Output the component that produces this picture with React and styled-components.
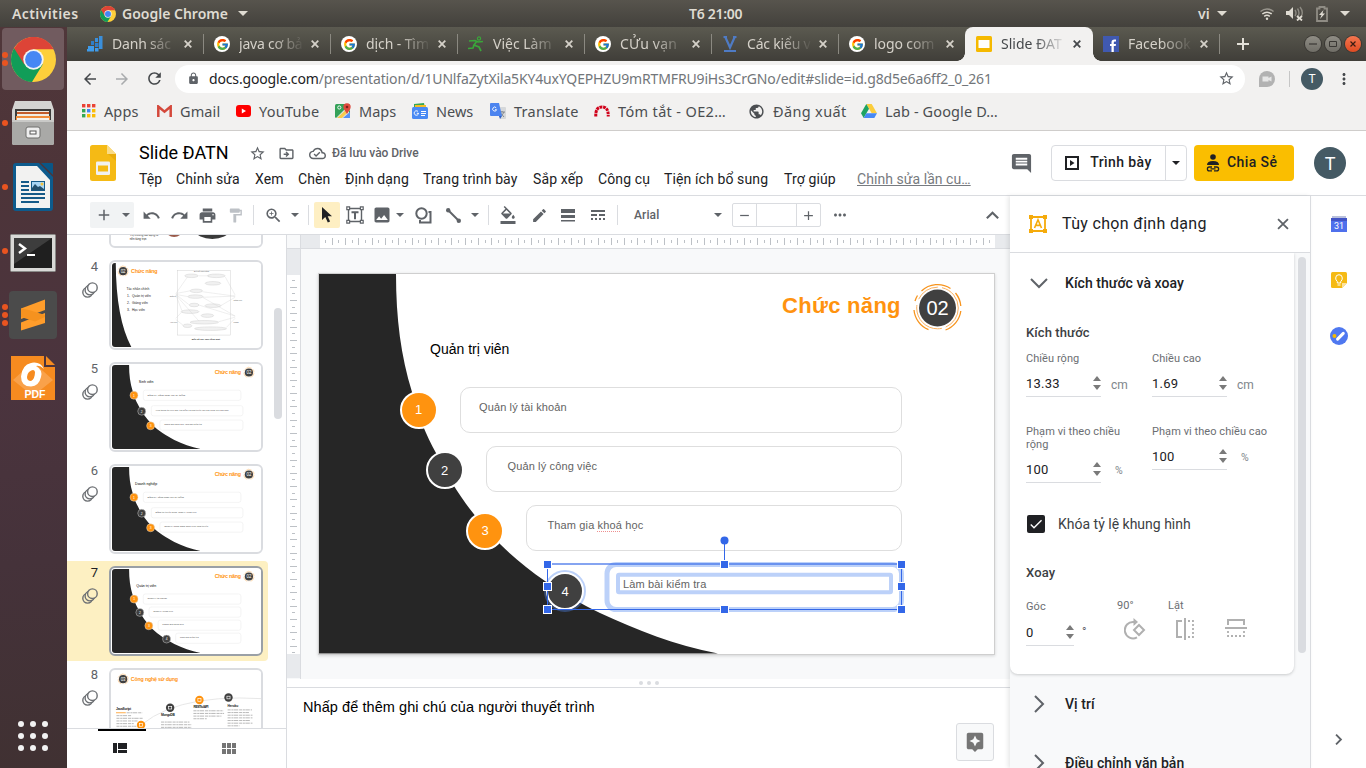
import React from "react";
import styled, { createGlobalStyle, css } from "styled-components";
import {
  MdUndo, MdRedo, MdPrint, MdFormatPaint, MdZoomIn, MdImage, MdMoreHoriz, MdMoreVert, MdAdd, MdRemove,
  MdStarBorder, MdLock, MdArrowBack, MdArrowForward, MdRefresh, MdComment, MdAssistant, MdCheck,
  MdFormatColorFill, MdEdit, MdOutlineDriveFileMove, MdOutlineCloudDone, MdPublic,
} from "react-icons/md";
import { FcGoogle } from "react-icons/fc";

const UI = `"Noto Sans", "Open Sans", sans-serif`;
const DOC = `Roboto, "Noto Sans", sans-serif`;
const SLIDE = `"Liberation Sans", Arial, sans-serif`;

const Global = createGlobalStyle`
  * { box-sizing: border-box; }
  html, body { margin: 0; padding: 0; overflow: hidden; background: #fff; }
  svg { display: block; flex: none; }
`;

/* ---------- shell ---------- */
const Screen = styled.div`
  width: 1366px; height: 768px; display: flex; flex-direction: column; overflow: hidden;
  font-family: ${DOC}; color: #202124; white-space: nowrap;
`;
const Txt = styled.span`
  display: block; flex: none;
  width: ${p => (p.$w ? p.$w + "px" : "auto")};
  font-size: ${p => p.$s || 14}px;
  font-weight: ${p => p.$b || 400};
  color: ${p => p.$c || "inherit"};
  letter-spacing: ${p => p.$ls || 0}px;
  padding-bottom: ${p => p.$up || 0}px;
`;
const TopBar = styled.header`
  height: 27px; flex: none; display: flex; align-items: center; padding: 0 15px 0 12px;
  background: linear-gradient(#57544d, #43413c); color: #dfdbd2; font-family: ${UI};
`;
const TopGroup = styled.div`
  display: flex; align-items: center; gap: ${p => p.$gap || 0}px; width: ${p => p.$w || "auto"};
  justify-content: ${p => p.$j || "flex-start"};
`;
const Gap = styled.i`width: ${p => p.$w}px; flex: none;`;
const Caret = styled.i`
  width: 0; height: 0; flex: none; border: solid transparent; margin: ${p => p.$m || 0};
  border-width: ${p => p.$s || 4}px ${p => p.$s || 4}px 0; border-top-color: ${p => p.$c || "#5f6368"};
`;
const Body = styled.div`display: flex; flex: 1; min-height: 0;`;

/* ---------- dock ---------- */
const Dock = styled.nav`
  width: 67px; flex: none; display: flex; flex-direction: column;
  background: linear-gradient(175deg, #50373a 0%, #4d3439 20%, #4b343e 48%, #45323a 72%, #403132 100%);
`;
const DockItem = styled.div`
  height: 64px; display: flex; align-items: center; position: relative;
`;
const DockTile = styled.div`
  width: 62px; height: 62px; margin-left: 2px; border-radius: 4px; display: flex; align-items: center; justify-content: center;
  background: ${p => (p.$active ? "#715b5f" : "transparent")}; padding-top: ${p => p.$pt || 0}px; padding-bottom: ${p => p.$pb || 0}px;
`;
const DockDots = styled.div`
  position: absolute; left: 2px; top: 0; height: 64px; display: flex; flex-direction: column; justify-content: center; gap: 2px;
  i { width: 6px; height: 6px; border-radius: 50%; background: #e95420; }
`;
const DockApps = styled.div`margin: auto 0 17px 18px;`;

/* ---------- browser ---------- */
const Browser = styled.main`flex: 1; min-width: 0; display: flex; flex-direction: column; background: #fff;`;
const TabStrip = styled.div`
  height: 34px; flex: none; display: flex; padding-left: 10px; background: linear-gradient(#5b5a50, #403e39);
`;
const Tab = styled.div`
  width: 127px; height: 34px; flex: none; display: flex; align-items: center; padding-left: 10px; position: relative;
  color: ${p => (p.$active ? "#45484b" : "#d5d1c9")}; font: 14px ${UI};
  ${p => p.$active && css`
    background: #f2f1f0; border-radius: 8px 8px 0 0; margin: 0 0 0 -1px; width: 128px; padding-left: 11px;
    &::before, &::after { content: ""; position: absolute; bottom: 0; width: 8px; height: 8px; }
    &::before { left: -8px; background: radial-gradient(circle at 0 0, transparent 7.5px, #f2f1f0 8px); }
    &::after { right: -8px; background: radial-gradient(circle at 100% 0, transparent 7.5px, #f2f1f0 8px); }
  `}
`;
const TabText = styled.span`
  width: 68px; margin: 0 4px 0 9px; line-height: 24px; letter-spacing: ${p => p.$ls || 0}px;
  mask-image: linear-gradient(90deg, #000 48%, transparent 96%);
`;
const TabSep = styled.i`
  width: 1px; height: 20px; background: #8b8981; margin: 7px 0 0 -1px; flex: none;
`;
const Favicon = styled.span`
  width: 16px; height: 16px; flex: none; display: flex; align-items: center; justify-content: center;
  background: ${p => p.$bg || "transparent"}; border-radius: ${p => p.$r || 0};
`;
const WinButtons = styled.div`display: flex; gap: 4px; align-items: center; margin: 0 5px 0 auto;`;
const WinButton = styled.div`
  width: 16px; height: 16px; border-radius: 50%; display: flex; align-items: center; justify-content: center;
  background: ${p => (p.$red ? "linear-gradient(#f4764f,#df4b22)" : "linear-gradient(#8f8d85,#706e67)")};
  box-shadow: 0 0 0 1px #3a3834;
`;
const AddressRow = styled.div`
  height: 36px; flex: none; display: flex; align-items: center; background: #f2f1f0; padding: 0 0 0 14px; color: #45484b;
`;
const NavCell = styled.div`
  width: 32px; display: flex; color: ${p => p.$c || "#45484b"}; padding-bottom: 1px;
`;
const UrlPill = styled.div`
  width: 1070px; height: 28px; border-radius: 14px; background: #fff; margin-left: -2px; padding: 0 10px 2px 12px;
  display: flex; align-items: center; font: 14px ${UI}; color: #72767a;
`;
const Url = styled.span`
  flex: 1; margin-left: 9px; letter-spacing: -.152px; b { font-weight: 400; color: #202124; }
`;
const VRule = styled.i`
  width: 1px; height: ${p => p.$h}px; background: ${p => p.$c || "#dadce0"}; margin: ${p => p.$m || 0}; flex: none;
`;
const RoundT = styled.div`
  width: ${p => p.$d}px; height: ${p => p.$d}px; border-radius: 50%; background: #455a64; color: #fff; flex: none;
  display: flex; align-items: center; justify-content: center; font: ${p => p.$fs}px ${DOC};
`;
const Bookmarks = styled.div`
  height: 34px; flex: none; background: #f2f1f0; border-bottom: 1px solid #cfcdcb; display: flex; align-items: center;
  padding: 0 0 5px 15px; font-family: ${UI}; color: #4b4e51;
`;
const Bookmark = styled.div`
  display: flex; align-items: center; gap: 8px; width: ${p => p.$w}px; flex: none;
`;

/* ---------- docs header ---------- */
const DocHeader = styled.div`
  height: 65px; flex: none; display: flex; border-bottom: 1px solid #dadce0; padding: 0 20px 0 23px;
`;
const TitleBlock = styled.div`flex: 1; margin-left: 23px; display: flex; flex-direction: column;`;
const TitleRow = styled.div`display: flex; align-items: center; height: 24px; margin-top: 10px; color: #5f6368;`;
const MenuRow = styled.div`display: flex; align-items: center; height: 28px;`;
const MenuLink = styled.span`
  font-size: 14px; letter-spacing: .05px; color: #777b80; text-decoration: underline; margin-left: 6px;
`;
const HeaderActions = styled.div`display: flex; align-items: center; height: 64px;`;
const SplitButton = styled.div`
  width: 136px; height: 36px; border: 1px solid #dadce0; border-radius: 4px; display: flex; align-items: center; margin-left: 18px;
`;
const ShareButton = styled.div`
  width: 100px; height: 36px; border-radius: 4px; background: #fabe00; display: flex; align-items: center; margin: 0 20px 0 7px; padding-left: 12px;
`;

/* ---------- workspace ---------- */
const Work = styled.div`flex: 1; display: flex; min-height: 0;`;
const Editor = styled.section`width: 943px; display: flex; flex-direction: column; flex: none;`;
const Tools = styled.div`
  height: 39px; flex: none; display: flex; align-items: center; border-bottom: 1px solid #dadce0; padding-left: 23px; color: #5f6368;
`;
const Tool = styled.div`
  width: ${p => p.$w || 28}px; height: 26px; flex: none; display: flex; align-items: center; justify-content: center;
  background: ${p => p.$bg || "transparent"}; border-radius: 2px; color: ${p => p.$c || "inherit"}; margin-left: ${p => p.$ml || 0}px;
`;
const SizeBox = styled.div`
  width: 89px; height: 24px; border: 1px solid #dadce0; border-radius: 2px; display: grid; grid-template-columns: 23px 40px 1fr;
  margin-left: 10px;
  div { display: flex; align-items: center; justify-content: center; }
  div + div { border-left: 1px solid #dadce0; }
`;
const Stage = styled.div`flex: 1; display: flex; min-height: 0;`;
const Film = styled.aside`width: 220px; flex: none; display: flex; flex-direction: column; border-right: 1px solid #dadce0;`;
const FilmScroll = styled.div`flex: 1; overflow: hidden; display: flex; min-height: 0;`;
const FilmList = styled.div`width: 201px; margin-top: -82px; flex: none;`;
const FilmRow = styled.div`
  height: 100px; margin-bottom: 2px; display: flex; padding: 5px 0 0 0; border-radius: 0 4px 4px 0;
  background: ${p => (p.$active ? "#fdf0c2" : "transparent")};
`;
const FilmMeta = styled.div`
  width: 42px; flex: none; display: flex; flex-direction: column; align-items: flex-end; padding-right: 11px; gap: 8px;
  font-size: 13px; line-height: 14px; color: ${p => (p.$active ? "#202124" : "#5f6368")};
`;
const Frame = styled.div`
  width: 154px; height: 90px; border-radius: 6px; border: 2px solid ${p => (p.$active ? "#9aa0a6" : "#dadce0")};
  background: #fff; padding: 1px; overflow: hidden;
  svg { border-radius: 3px; }
`;
const FilmBar = styled.i`width: 8px; height: 111px; border-radius: 4px; background: #dadce0; margin: 73px 0 0 6px;`;
const ViewSwitch = styled.div`height: 40px; flex: none; border-top: 1px solid #dadce0; display: flex; padding-left: 31px;`;
const ViewTab = styled.div`
  width: ${p => p.$w}px; display: flex; justify-content: center; padding-top: ${p => (p.$on ? 12 : 14)}px; margin-left: ${p => p.$ml || 0}px;
  padding-right: ${p => (p.$on ? 4 : 0)}px; border-top: ${p => (p.$on ? "2px solid #000" : 0)};
`;
const RulerV = styled.div`width: 14px; flex: none; border-right: 1px solid #dadce0; height: 444px; background: #f8f9fa;`;
const CanvasCol = styled.div`flex: 1; min-width: 0; display: flex; flex-direction: column;`;
const CanvasArea = styled.div`
  height: 430px; flex: none; background: #f8f9fa; padding: 24px 0 0 17px;
`;
const Upper = styled.div`display: flex; height: 444px; flex: none; border-bottom: 1px solid #dadce0;`;
const UpperMain = styled.div`flex: 1; display: flex; flex-direction: column;`;
const RulerH = styled.div`height: 14px; border-bottom: 1px solid #dadce0; background: #fff;`;
const Grip = styled.div`
  height: 9px; flex: none; border-bottom: 1px solid #dadce0; display: flex; gap: 4px; align-items: center; justify-content: center;
  i { width: 4px; height: 4px; border-radius: 50%; background: #dadce0; }
`;
const Notes = styled.div`
  flex: 1; display: flex; justify-content: space-between; padding: 11px 16px 0 16px; color: #000; font-family: ${SLIDE};
`;
const ExploreButton = styled.div`
  width: 38px; height: 38px; margin-top: 24px; border: 1px solid #dadce0; border-radius: 3px; background: #f8f9fa;
  display: flex; align-items: center; justify-content: center; color: #757575;
`;

/* ---------- slide ---------- */
const SlidePage = styled.div`
  width: 677px; height: 382px; border: 1px solid #cfcfcf; background: #fff; position: relative; box-shadow: 0 1px 3px rgba(0,0,0,.15);
  font-family: ${SLIDE};
`;
const Art = styled.svg`position: absolute; left: 0; top: 0; overflow: visible;`;
const SlideText = styled.div`
  position: absolute; left: ${p => p.$x}px; top: ${p => p.$y - 14}px; line-height: 28px; font-size: ${p => p.$s}px;
  color: ${p => p.$c}; font-weight: ${p => p.$b || 400}; letter-spacing: ${p => p.$ls || 0}px;
  u { text-decoration: underline dotted #ee8f8f 1px; text-underline-offset: 2px; }
`;
const Box = styled.div`
  position: absolute; left: ${p => p.$x}px; top: ${p => p.$y}px; width: ${p => 583 - p.$x}px; height: 46px;
  border: 1px solid #dedede; border-radius: 10px;
`;
const Bullet = styled.div`
  position: absolute; left: ${p => p.$x - 19}px; top: ${p => p.$y - 19}px; width: 38px; height: 38px; border-radius: 50%;
  border: 2px solid #fff; background: ${p => p.$c}; color: #fff; font-size: 13px;
  display: flex; align-items: center; justify-content: center;
`;

/* ---------- format panel ---------- */
const Panel = styled.aside`
  width: 301px; flex: none; display: flex; flex-direction: column; border-right: 1px solid #dadce0; background: #f8f9fa;
  box-shadow: -2px 0 4px rgba(60,64,67,.12); position: relative;
`;
const PanelHead = styled.div`
  height: 57px; flex: none; background: #fff; border-bottom: 1px solid #dadce0; display: flex; align-items: center; padding: 0 17px 0 19px;
`;
const PanelBody = styled.div`flex: 1; display: flex; min-height: 0; overflow: hidden;`;
const PanelCol = styled.div`width: 284px; flex: none;`;
const Card = styled.div`
  height: 421px; background: #fff; border-radius: 0 0 8px 8px; box-shadow: 0 1px 3px rgba(60,64,67,.25); padding: 0 16px;
  display: flex; flex-direction: column;
`;
const SectionHead = styled.div`
  display: flex; align-items: center; height: ${p => p.$h || 60}px; font-size: 14px; font-weight: 500; flex: none;
  padding-left: ${p => p.$pl || 0}px; gap: ${p => p.$gap}px; letter-spacing: .05px;
`;
const SubHead = styled(SectionHead)`
  font-size: 13px; height: ${p => p.$h}px; margin-top: ${p => p.$mt || 0}px; color: #3c4043; letter-spacing: .1px;
`;
const Fields = styled.div`display: grid; grid-template-columns: 126px 126px; margin-top: ${p => p.$mt}px; align-items: start;`;
const Field = styled.div`display: flex; flex-direction: column;`;
const FieldLabel = styled.div`
  font-size: 11px; line-height: 13px; letter-spacing: .06px; color: #6b6e72; white-space: normal; width: ${p => p.$w || 50}px;
`;
const FieldRow = styled.div`display: flex; align-items: center; margin-top: 6px; height: 26px;`;
const Input = styled.div`
  width: ${p => p.$w || 75}px; height: 26px; border-bottom: 1px solid #dadce0; display: flex; align-items: center; justify-content: space-between;
  font-size: 13px; letter-spacing: .25px;
`;
const Unit = styled.span`
  font-size: 12px; color: #80868b; margin-left: ${p => (p.$pct ? 14 : 10)}px; padding-top: 1px; transform-origin: left;
  ${p => p.$pct && "font-size: 10.5px;"}
`;
const Degree = styled.span`font-size: 12px; color: #5f6368; padding-bottom: 3px;`;
const Spin = styled.div`
  display: flex; flex-direction: column; gap: 4px; margin-bottom: 1px;
  i { border: 4px solid transparent; border-width: 0 4px 5px; border-bottom-color: #7a7a7a; }
  i + i { border-width: 5px 4px 0; border-top-color: #7a7a7a; }
`;
const Check = styled.div`
  width: 18px; height: 18px; border-radius: 2px; background: #202124; color: #fff; display: flex; align-items: center; justify-content: center;
`;
const CheckRow = styled.div`display: flex; align-items: center; gap: 13px; margin: 31px 0 0 1px; height: 20px; color: #3c4043;`;
const RotateRow = styled.div`display: flex; margin-top: 10px;`;
const RotateCol = styled.div`
  display: flex; flex-direction: column; width: ${p => p.$w}px; gap: ${p => p.$gap || 6}px; margin-top: ${p => (p.$gap ? 0 : -1)}px;
`;
const Indent = styled.div`padding-left: 7px;`;
const PanelBar = styled.i`width: 8px; height: 396px; border-radius: 4px; background: #dadce0; margin: 4px 0 0 4px;`;
const SideRail = styled.aside`
  flex: 1; display: flex; flex-direction: column; align-items: center; padding: 20px 0 23px 1px; gap: 39.5px;
  > :last-child { margin-top: auto; margin-right: 2px; }
`;

/* ---------- drawings ---------- */
const ChromeLogo = ({ s }) => (
  <svg width={s} height={s} viewBox="0 0 44 44">
    <circle cx="22" cy="22" r="22" fill="#fdcf3b" />
    <path d="M22 22 L3 11 A22 22 0 0 0 20.5 44 L31 27z" fill="#119d58" />
    <path d="M22 12 H41.8 A22 22 0 0 0 3 11 L13 27z" fill="#dd4437" />
    <circle cx="22" cy="22" r="10" fill="#f3f3f3" />
    <circle cx="22" cy="22" r="8.2" fill="#4687f4" />
  </svg>
);
const FilesIcon = () => (
  <svg width="44" height="46" viewBox="0 0 44 46">
    <path d="M4 1h36l3 9v33q0 2-2 2H3q-2 0-2-2V10z" fill="#d3d3d1" />
    <path d="M4 9h36v12H4z" fill="#3c3c3b" />
    <path d="M6 11h32v10H6z" fill="#f0ece4" />
    <path d="M6 12h32v2H6z" fill="#c35c2b" />
    <path d="M5 16h34v5H5z" fill="#f18c3a" /><path d="M6 18h32v3H6z" fill="#f5f2ec" />
    <path d="M1 20h42v23q0 2-2 2H3q-2 0-2-2z" fill="#a9a9a7" />
    <path d="M1 20h42v2H1z" fill="#c9c9c7" />
    <rect x="15" y="27" width="14" height="11" rx="2" fill="#eee" stroke="#6e6e6c" />
    <rect x="19" y="31" width="6" height="3" fill="#fff" stroke="#555" />
  </svg>
);
const WriterIcon = () => (
  <svg width="40" height="48" viewBox="0 0 40 48">
    <path d="M3 0h23l14 14v31q0 3-3 3H3q-3 0-3-3V3q0-3 3-3z" fill="#0d5b8d" />
    <path d="M28 0h11q1 0 1 1v11z" fill="#0a5686" />
    <path d="M3 3h21l13 14v28H3z" fill="#f2f2f1" />
    <g stroke="#155a88" strokeWidth="2"><path d="M8 19h8M8 23h8M8 27h8M8 31h24M8 35h24M8 39h18" /></g>
    <rect x="18" y="18" width="14" height="10" fill="#155a88" /><rect x="19" y="19" width="12" height="8" fill="#a9d5f3" />
    <path d="M19 27v-2l3-4 3 3 2-1 4 3v1z" fill="#24506c" /><circle cx="29" cy="21" r="1.5" fill="#f3c13b" />
  </svg>
);
const TerminalIcon = () => (
  <svg width="46" height="38" viewBox="0 0 46 38">
    <rect x=".5" y=".5" width="45" height="37" rx="1" fill="#d9d9d7" stroke="#8a8a88" />
    <rect x="4" y="4" width="38" height="30" fill="#1f1f1f" /><path d="M4 4h38L4 30z" fill="#3d3d3d" />
    <path d="M9 10l6 4.500-6 4.500" fill="none" stroke="#fff" strokeWidth="2.400" /><path d="M17 21h8" stroke="#fff" strokeWidth="2" />
  </svg>
);
const SublimeIcon = () => (
  <svg width="48" height="48" viewBox="0 0 48 48">
    <rect width="48" height="48" rx="4" fill="#4b4b4b" />
    <path d="M12 17.500L36 8.500v10.500L12 28z" fill="#ff9d2b" />
    <path d="M12 31.500L36 22v10L12 39.500z" fill="#ff9d2b" />
    <path d="M12 17.500V26l14 4.500L36 26v-2l-16-5z" fill="#f5921f" />
  </svg>
);
const FoxitIcon = () => (
  <svg width="44" height="44" viewBox="0 0 44 44">
    <path d="M0 0h33v11h11v33H0z" fill="#f68b20" /><path d="M35 0l9 9h-9z" fill="#f68b20" />
    <path d="M22 6l20 18-20 16L2 24z" fill="#fbb168" opacity=".6" />
    <path d="M20 7q9-2 13 6-4-4-8-3 7 4 5 11-2 9-10 9.500-10 0-10-10Q11 9 20 7z" fill="#fff" />
    <path d="M18 16q5-4 6 0 0 7-4 9-4 0-4-4 0-3 2-5z" fill="#f68b20" />
    <text x="13.500" y="42" fontFamily="Liberation Sans, sans-serif" fontWeight="700" fontSize="10.500" fill="#fff">PDF</text>
  </svg>
);
const GridDots = () => (
  <svg width="30" height="30" viewBox="0 0 30 30" fill="#f2f2f2">
    {[3, 15, 27].map(y => [3, 15, 27].map(x => <circle key={x + "-" + y} cx={x} cy={y} r="3" />))}
  </svg>
);
const Wifi = () => (
  <svg width="14" height="14" viewBox="0 0 14 14" fill="none" stroke="#dfdbd2" strokeWidth="1.500">
    <path d="M.5 4.500q6.500-5 13 0" opacity=".5" /><path d="M2.300 7q4.700-3.600 9.400 0" /><path d="M4.200 9.300q2.800-2 5.600 0" /><circle cx="7" cy="11.800" r="1.200" fill="#dfdbd2" stroke="none" />
  </svg>
);
const Sound = () => (
  <svg width="18" height="15" viewBox="0 0 18 15">
    <path d="M0 5h3l4-4v12L3 9H0z" fill="#dfdbd2" />
    <path d="M9 4q2 3 0 6M11.500 2.500q3 4.500 0 9M14 1q4 5 1 10" fill="none" stroke="#8d8a82" strokeWidth="1.400" />
    <path d="M11 10l5 4.500M16 10l-5 4.500" stroke="#dfdbd2" strokeWidth="1.800" />
  </svg>
);
const Battery = () => (
  <svg width="12" height="16" viewBox="0 0 12 16">
    <path d="M3.500 2.500V1h5v1.500H11v12.500H1V2.500z" fill="none" stroke="#8f8c84" strokeWidth="1.800" />
    <path d="M7.500 4L3 9h2.500L4 13l5-5.500H6.500z" fill="#dfdbd2" />
  </svg>
);
const X = ({ s = 8, c = "currentColor", w = 1.8 }) => (
  <svg width={s} height={s} viewBox="0 0 8 8"><path d="M.7.7l6.600 6.600M7.300.7L.7 7.300" stroke={c} strokeWidth={w} /></svg>
);
const Chev = ({ dir, s = 18, w = 2 }) => (
  <svg width={s} height={s} viewBox="0 0 18 18" fill="none" stroke="#5f6368" strokeWidth={w}>
    <path d={dir === "down" ? "M1 5l8 8 8-8" : dir === "up" ? "M3 12l6-6 6 6" : "M5 1l8 8-8 8"} />
  </svg>
);
const BarsIcon = () => (
  <svg width="16" height="16" viewBox="0 0 16 16">
    <path d="M8 2h3v4H8zM12 0h3.500v13H12z" fill="#3a8fdc" /><path d="M4 5h3v4H4zM8 7h3.500v4H8z" fill="#2f7dc8" />
    <path d="M1 10h6v3H1zM0 13h7v2.500H0zM8 12h3.500v3.500H8z" fill="#3f9bea" />
  </svg>
);
const RunnerIcon = () => (
  <svg width="16" height="16" viewBox="0 0 16 16" fill="none" stroke="#3aa63a" strokeWidth="1.700">
    <circle cx="11" cy="2.500" r="1.600" strokeWidth="1.200" /><path d="M1 5l6-.500 3 1.500 5-.500M9 5L6 9l5 2 2 4M6 9l-1 3-5 .500" />
  </svg>
);
const VIcon = () => (
  <svg width="14" height="16" viewBox="0 0 14 16" fill="none" stroke="#4f7bc4" strokeWidth="2.200"><path d="M.5 1h3.500M10 1h3.500M2.300 1L7 11.500 11.700 1" /><path d="M1 15h12" strokeWidth="2" /></svg>
);
const SlidesFav = () => (
  <svg width="16" height="16" viewBox="0 0 16 16"><rect width="16" height="16" rx="1.500" fill="#f5b900" /><path d="M2.500 4h11v8h-11z" fill="#fff" /></svg>
);
const FbIcon = () => (
  <svg width="16" height="16" viewBox="0 0 16 16"><path d="M0 0h16v16H0z" fill="#4059b0" /><path d="M8.500 16V10H7V8h1.500V6.300Q8.500 3.500 11.500 3.500H13v2h-1.200q-1 0-1 1V8H13l-.3 2h-1.900v6z" fill="#fff" /></svg>
);
const AppsIcon = () => {
  const c = ["#ea4335", "#ea4335", "#ea4335", "#34a853", "#4285f4", "#fbbc04", "#34a853", "#fbbc04", "#fbbc04"];
  return <svg width="14" height="14" viewBox="0 0 14 14">{c.map((f, i) => <rect key={i} x={(i % 3) * 5} y={Math.floor(i / 3) * 5} width="3.400" height="3.400" fill={f} />)}</svg>;
};
const GmailIcon = () => (
  <svg width="15" height="12" viewBox="0 0 15 12"><path d="M0 0h15v12H0z" fill="#f1efef" /><path d="M1.300 12V1.500l6.200 5.200 6.200-5.200V12" fill="none" stroke="#d4483b" strokeWidth="2.500" /></svg>
);
const YtIcon = () => (
  <svg width="15" height="12" viewBox="0 0 15 12"><rect width="15" height="12" rx="3" fill="#f00" /><path d="M5.800 3.500L10 6 5.800 8.500z" fill="#fff" /></svg>
);
const MapsIcon = () => (
  <svg width="16" height="16" viewBox="0 0 16 16"><rect y="1" width="15" height="14" rx="1.500" fill="#34a158" /><path d="M1 15L14 2v13z" fill="#dfe2e4" /><path d="M2 15L13 5l2 2-8 8z" fill="#f7cb4d" /><path d="M8 15h7V9z" fill="#5491f5" /><circle cx="4.300" cy="4.500" r="1.600" fill="none" stroke="#fff" strokeWidth=".9" /><path d="M8.300 4a3.700 3.700 0 0 1 7.400 0q0 2-2 4.200L12 11l-1.700-2.800Q8.300 6 8.300 4z" fill="#de4a3e" /><circle cx="12" cy="4" r="1.300" fill="#80201a" /></svg>
);
const NewsIcon = () => (
  <svg width="16" height="16" viewBox="0 0 16 16"><path d="M2 1l10-1 1 5H2z" fill="#36a655" /><path d="M3 2h11v5H3z" fill="#f8bd24" /><rect y="4" width="16" height="12" rx="1.500" fill="#4a8af4" /><path d="M6 8.500a2.200 2.200 0 1 0 .6 1.800H4.800" fill="none" stroke="#fff" /><path d="M9 8.500h5M9 10.500h5M9 12.500h4" stroke="#fff" /></svg>
);
const TranslateIcon = () => (
  <svg width="16" height="16" viewBox="0 0 16 16"><path d="M6 4h9q1 0 1 1v10q0 1-1 1h-5z" fill="#d6d8da" /><path d="M9 9h6M12 8v1M14 9q-1 3-4 4M10.500 10l3.500 4" stroke="#7b8086" fill="none" strokeWidth=".9" /><path d="M1 0h8l3 13H1q-1 0-1-1V1q0-1 1-1z" fill="#4c84ef" /><path d="M9 13h3l-2 3z" fill="#2f5fc4" /><path d="M6.200 4.800A2 2 0 1 0 6.600 6.700H5" fill="none" stroke="#fff" strokeWidth=".9" /></svg>
);
const ArcIcon = () => (
  <svg width="16" height="12" viewBox="0 0 16 12"><path d="M1.800 11.500q-.5-9.500 6.200-9.500t6.200 9.500" fill="none" stroke="#d0021b" strokeWidth="3" strokeDasharray="2.800 .7" /></svg>
);
const DriveIcon = () => (
  <svg width="16" height="14" viewBox="0 0 16 14"><path d="M5.300 0h5.400L16 9.300h-5.300z" fill="#fbcd3c" /><path d="M5.300 0L8 4.700 2.700 14 0 9.300z" fill="#1ea362" /><path d="M5.400 9.300H16L13.300 14H2.700z" fill="#4688f4" /></svg>
);
const SlidesDocIcon = () => (
  <svg width="26" height="36" viewBox="0 0 26 36">
    <path d="M2.500 0H17l9 9v24.500q0 2.500-2.500 2.500h-21Q0 36 0 33.500v-31Q0 0 2.500 0z" fill="#f5ba15" />
    <path d="M17 0l9 9h-9z" fill="#fadb85" /><path d="M18 9h8v7z" fill="#e9ac0b" /><rect x="6" y="16.500" width="14" height="13.500" rx="1.300" fill="#f1f1f1" /><path d="M8 20.500h10v6H8z" fill="#f5ba15" />
  </svg>
);
const PlayBox = () => (
  <svg width="14" height="14" viewBox="0 0 14 14"><path d="M1 1h12v12H1z" fill="none" stroke="#202124" strokeWidth="2" /><path d="M5 4v6l4.500-3z" fill="#202124" /></svg>
);
const ShareIcon = () => (
  <svg width="14" height="18" viewBox="0 0 14 18" fill="#202124"><circle cx="7" cy="3" r="2.800" /><path d="M1 11q0-4 6-4t6 4z" /><g fill="none" stroke="#202124" strokeWidth="1.300"><path d="M6 16.800H3.300a1.900 1.900 0 0 1 0-3.800H6M8 13h2.700a1.900 1.900 0 0 1 0 3.800H8M4.500 14.900h5" /></g></svg>
);
const ArrowCursor = () => (
  <svg width="12" height="18" viewBox="0 0 12 18"><path d="M1 1v13l3.300-3 2.500 5.500 2.300-1-2.400-5.300H11z" fill="#202124" /></svg>
);
const TextBoxIcon = () => (
  <svg width="18" height="18" viewBox="0 0 18 18" fill="none" stroke="#5f6368" strokeWidth="1.400"><path d="M2.500 2.500h13v13h-13z" /><path d="M5.500 6.200h7M9 6.200v7" strokeWidth="2" /><g fill="#fff" strokeWidth="1.200"><path d="M.8.8h2.800v2.800H.8zM14.400.8h2.800v2.800h-2.800zM.8 14.400h2.800v2.800H.8zM14.400 14.400h2.800v2.800h-2.800z" /></g></svg>
);
const ShapeIcon = () => (
  <svg width="17" height="17" viewBox="0 0 17 17" fill="none" stroke="#5f6368" strokeWidth="2"><circle cx="6.500" cy="6.500" r="5.200" /><path d="M13.500 5H15.500V15.500H5V13" /></svg>
);
const LineIcon = () => (
  <svg width="15" height="15" viewBox="0 0 15 15"><path d="M2 2l11 11" stroke="#5f6368" strokeWidth="2" /><circle cx="2.200" cy="2.200" r="2.200" fill="#5f6368" /><circle cx="12.800" cy="12.800" r="2.200" fill="#5f6368" /></svg>
);
const WeightIcon = () => <svg width="14" height="13" viewBox="0 0 14 13" fill="#5f6368"><path d="M0 0h14v4H0zM0 6h14v3H0zM0 11h14v1.500H0z" /></svg>;
const DashIcon = () => <svg width="14" height="12" viewBox="0 0 14 12" fill="#5f6368"><path d="M0 1h14v2H0zM0 5h6v2H0zM8 5h6v2H8zM0 9h2v2H0zM4 9h2v2H4zM8 9h2v2H8zM12 9h2v2h-2z" /></svg>;
const AnimIcon = ({ bg }) => (
  <svg width="16" height="16" viewBox="0 0 16 16" fill={bg} stroke="#6d7074" strokeWidth="1.400">
    <circle cx="5.600" cy="10.300" r="4.800" /><circle cx="7.900" cy="8.100" r="4.800" /><circle cx="10.400" cy="5.700" r="4.800" />
  </svg>
);
const FormatIcon = () => (
  <svg width="18" height="18" viewBox="0 0 18 18"><path d="M2 2h14v14H2z" fill="none" stroke="#f5ab0c" strokeWidth="1.800" /><path d="M0 0h4v4H0zM14 0h4v4h-4zM0 14h4v4H0zM14 14h4v4h-4z" fill="#f5ab0c" /><path d="M5.500 13L9 4.800 12.500 13M6.700 10.400h4.600" fill="none" stroke="#f5ab0c" strokeWidth="1.600" /></svg>
);
const RotateIcon = () => (
  <svg width="22" height="22" viewBox="0 0 22 22" fill="none" stroke="#b0b0b0" strokeWidth="2"><path d="M13 19.300A8.200 8.200 0 1 1 10 4h2" /><path d="M9.500 0L14 4 9.500 8z" fill="#b0b0b0" stroke="none" /><path d="M15 7l5 5-5 5-5-5z" /></svg>
);
const FlipH = () => (
  <svg width="20" height="22" viewBox="0 0 20 22" fill="none" stroke="#b0b0b0" strokeWidth="2"><path d="M7 3H2v16h5M10 0v22" /><path d="M13 3h5v16h-5" strokeDasharray="2 2" strokeWidth="1.800" /></svg>
);
const FlipV = () => (
  <svg width="22" height="20" viewBox="0 0 22 20" fill="none" stroke="#b0b0b0" strokeWidth="2"><path d="M3 7V2h16v5M0 10h22" /><path d="M3 13v5h16v-5" strokeDasharray="2 2" strokeWidth="1.800" /></svg>
);
const CalendarIcon = () => (
  <svg width="16" height="16" viewBox="0 0 16 16"><path d="M1 0h14v4H1z" fill="#b9c0dc" /><path d="M0 2h16v14H0z" fill="#4f70ec" /><path d="M0 2h16v3H0z" fill="#4254c5" /><text x="8" y="13" textAnchor="middle" fontSize="9" fontFamily="Roboto, sans-serif" fill="#fff">31</text></svg>
);
const KeepIcon = () => (
  <svg width="16" height="16" viewBox="0 0 16 16"><path d="M1.500 0h13q1.500 0 1.500 1.500V11l-5 5H1.500Q0 16 0 14.500v-13Q0 0 1.500 0z" fill="#f5ba15" /><path d="M16 11l-5 5v-5z" fill="#fbe3a0" /><path d="M6.300 9.500Q4.500 8 4.700 6a3.300 3.300 0 0 1 6.600 0q.2 2-1.600 3.500v1.500H6.300zM6.500 13h3" fill="none" stroke="#fff" /></svg>
);
const TasksIcon = () => (
  <svg width="18" height="18" viewBox="0 0 19 19"><circle cx="9.500" cy="9.500" r="9.500" fill="#4f78f0" /><circle cx="4.700" cy="9.500" r="2.100" fill="#f5b900" /><path d="M8 12.800l6-6" stroke="#fff" strokeWidth="3.200" strokeLinecap="round" /></svg>
);

/* ---------- slide art ---------- */
const CURVE = "M0 0H77C77 45 82 82 93 118C99 142 107 161 117 179C134 215 155 243 181 270C195 284 210 296 226 307C245 320 262 330 281 339C318 356 355 371 399 379.500H0z";
const Badge = ({ x, y, label = "02" }) => (
  <g transform={`translate(${x} ${y})`}>
    <circle r="20.800" fill="none" stroke="#f9b060" strokeWidth="1" strokeDasharray="24 4 40 6" />
    <path d="M-22.500 -7A23.500 23.500 0 0 1 -20 -12.500M-23.500 2A23.500 23.500 0 0 0 -9 21.700M-16 -17A23.500 23.500 0 0 1 13 -19.500M18 -15A23.500 23.500 0 0 1 23.300 -2M23.300 3A23.500 23.500 0 0 1 8 22" fill="none" stroke="#f7941d" strokeWidth="1.300" />
    <circle r="18.500" fill="#404040" />
    <text y="7.200" textAnchor="middle" fontSize="20" fill="#fff" fontFamily="Liberation Sans, sans-serif">{label}</text>
  </g>
);
const Mini = ({ children }) => (
  <svg width="150" height="84" viewBox="0 0 676 380" preserveAspectRatio="none" fontFamily="Liberation Sans, sans-serif">
    <rect width="676" height="380" fill="#fff" />
    {children}
  </svg>
);
const MiniList = ({ label, lx, items }) => (
  <Mini>
    <path d={CURVE} fill="#262626" />
    <text x="463" y="40" fontSize="24" fontWeight="700" fill="#ff930f" textLength="118">Chức năng</text>
    <Badge x={617} y={34} />
    <text x={lx} y="81" fontSize="16" fill="#000">{label}</text>
    {items.map((it, i) => (
      <g key={i}>
        <rect x={it.b[0]} y={it.b[1]} width={it.b[2] - it.b[0]} height="46" rx="10" fill="none" stroke="#eeeeee" strokeWidth="3" />
        <text x={it.b[0] + 19} y={it.b[1] + 24} fontSize="11" fill="#444" textLength={it.t} lengthAdjust="spacingAndGlyphs">{it.s}</text>
        <circle cx={it.c[0]} cy={it.c[1]} r="18" fill={i % 2 ? "#404040" : "#ff930f"} stroke="#ddd" strokeWidth="2" />
        <text x={it.c[0]} y={it.c[1] + 6} fontSize="15" fill="#fff" textAnchor="middle">{i + 1}</text>
      </g>
    ))}
  </Mini>
);
const three = (a, b, c) => [
  { b: [141, 114, 581], c: [99, 137], ...a },
  { b: [177, 184, 590], c: [134, 209], ...b },
  { b: [216, 249, 590], c: [174, 275], ...c },
];
const four = [
  { b: [141, 113, 581], c: [99.500, 136], t: 88, s: "Quản lý tài khoản" },
  { b: [167, 172, 581], c: [125.500, 196.500], t: 89, s: "Quản lý công việc" },
  { b: [208, 231, 581], c: [166, 257], t: 96, s: "Tham gia khoá học" },
  { b: [287, 290, 581], c: [246, 317], t: 84, s: "Làm bài kiểm tra" },
];
const MiniUseCase = () => (
  <Mini>
    <path d="M0 0H17Q18 250 87 380H0z" fill="#262626" />
    <Badge x={50} y={37} />
    <text x="86" y="45" fontSize="24" fontWeight="700" fill="#ff930f" textLength="119">Chức năng</text>
    <g fontSize="15" fill="#222">
      <text x="65" y="122">Tác nhân chính</text>
      <text x="68" y="154">1.</text><text x="68" y="186">2.</text><text x="68" y="218">3.</text>
      <text x="90" y="154">Quản trị viên</text><text x="90" y="186">Giảng viên</text><text x="90" y="218">Học viên</text>
    </g>
    <g fill="none" stroke="#cdcdcd" strokeWidth="2">
      <rect x="295" y="33" width="239" height="293" />
      {[[358, 58, 30], [470, 58, 40], [455, 92, 35], [380, 126, 28], [376, 152, 34], [370, 190, 22], [455, 193, 36], [352, 220, 40], [430, 238, 28], [416, 268, 64], [340, 284, 20], [444, 297, 72]].map(([x, y, r], i) => (
        <ellipse key={i} cx={x} cy={y} rx={r} ry="8" fill="#f1f1f1" />
      ))}
      <path d="M288 138L341 62M288 138L352 126M288 142L341 152M288 142L346 188M288 145L316 218M288 145L391 262M288 250L316 220M288 256L321 282M391 58H436M555 145L510 62M555 150L408 130M555 150L410 155M555 155L490 193M555 240L391 190M555 240L408 155M555 245L480 266M555 250L515 292" strokeWidth="1.500" />
    </g>
    <g fontSize="8" fill="#555"><text x="260" y="155">Quản trị</text><text x="262" y="272">Học viên</text><text x="548" y="170">Giảng viên</text><text x="548" y="272">Khách</text><text x="370" y="40">Biểu đồ chức năng</text></g>
    <text x="359" y="348" fontSize="10" fontWeight="700" fill="#333" textLength="128">Biểu đồ use case tổng quát</text>
  </Mini>
);
const MiniTech = () => (
  <Mini>
    <Badge x={50} y={37} label="03" />
    <text x="85" y="45" fontSize="24" fontWeight="700" fill="#ff930f" textLength="213">Công nghệ sử dụng</text>
    <path d="M90 285Q250 100 676 125" fill="none" stroke="#e4e4e4" strokeWidth="4" />
    {[[131, 244, 1], [262, 166, 0], [394, 131, 1], [525, 120, 0]].map(([x, y, o], i) => (
      <g key={i}><circle cx={x} cy={y} r="19" fill={o ? "#ff930f" : "#404040"} /><rect x={x - 7} y={y - 6} width="14" height="12" fill="none" stroke="#fff" strokeWidth="3" /></g>
    ))}
    <g fontSize="15" fontWeight="700" fill="#222">
      <text x="18" y="177" textLength="68">JavaScript</text><text x="221" y="204" textLength="62">MongoDB</text><text x="367" y="168" textLength="68">RESTful API</text><text x="521" y="163" textLength="48">Heroku</text>
    </g>
    <g stroke="#a5a5a5" strokeWidth="3.500" strokeDasharray="14 3 9 2 20 4">
      <path d="M66 189h70M20 202h68M20 214h118M20 226h95M20 238h78M20 250h90M221 231h128M221 243h136M221 255h136M367 180h134M367 192h138M367 204h126M367 216h60M521 176h110M521 188h96M521 200h112M521 212h112M521 224h100M521 236h112M521 248h54M221 267h138" />
    </g>
    <path d="M18 189h44" stroke="#ffad4a" strokeWidth="5" />
  </Mini>
);
const MiniCut = () => (
  <Mini>
    <circle cx="280" cy="302" r="42" fill="#9a5a4a" /><ellipse cx="452" cy="315" rx="75" ry="38" fill="#3a3a3a" />
    <g fontSize="13" fill="#222"><text x="80" y="340">Thị trường lao động là</text><text x="80" y="356">nền tảng trực</text></g>
  </Mini>
);

const films = [
  { n: 3, el: <MiniCut /> },
  { n: 4, el: <MiniUseCase /> },
  { n: 5, el: <MiniList label="Sinh viên" lx={121} items={three({ t: 170, s: "Đăng ký, đăng nhập vào hệ thống" }, { t: 329, s: "Xem thông tin việc làm, tìm kiếm và ứng tuyển vào các công việc phù hợp" }, { t: 170, s: "Tham gia khoá học, làm bài kiểm tra" })} /> },
  { n: 6, el: <MiniList label="Doanh nghiệp" lx={104} items={three({ t: 164, s: "Đăng ký, đăng nhập vào hệ thống" }, { t: 185, s: "Đăng tin tuyển dụng, quản lý công việc" }, { t: 198, s: "Quản lý danh sách sinh viên ứng tuyển" })} /> },
  { n: 7, active: true, el: <MiniList label="Quản trị viên" lx={109} items={four} /> },
  { n: 8, el: <MiniTech /> },
];

const ticks = (n, make) => Array.from({ length: n }, (_, i) => make(i + 1));
const HTicks = () => (
  <svg width="709" height="13" viewBox="0 0 709 13">
    <path d="M0 0h19v13H0zM694 0h15v13h-15z" fill="#e8eaed" />
    {ticks(101, k => <rect key={k} x={Math.round(17.500 + k * 6.643)} y={k % 2 ? 5 : 3} width="1" height={k % 2 ? 3 : 7} fill="#bdc1c6" />)}
  </svg>
);
const VTicks = () => (
  <svg width="13" height="443" viewBox="0 0 13 443">
    <rect width="13" height="443" fill="#fff" /><path d="M0 0h13v13H0z" fill="#f8f9fa" /><path d="M0 13h13v1H0z" fill="#dadce0" /><path d="M0 14h13v26H0zM0 419h13v24H0z" fill="#e8eaed" />
    {ticks(57, k => <rect key={k} y={Math.round(38.500 + k * 6.643)} x={k % 2 ? 5 : 3} height="1" width={k % 2 ? 3 : 7} fill="#bdc1c6" />)}
  </svg>
);

const Selection = () => (
  <Art width="675" height="380" viewBox="0 0 675 380">
    <g fill="none" stroke="#4f86ee" strokeOpacity=".38">
      <rect x="288" y="290.500" width="294.500" height="45" rx="9" strokeWidth="5" />
      <rect x="299" y="300.700" width="273" height="17.500" rx="1" strokeWidth="4" />
      <circle cx="246" cy="317" r="20" strokeWidth="2" />
    </g>
    <g fill="none" stroke="#3367e8">
      <path d="M228.500 290H583" strokeOpacity=".6" strokeWidth="2" /><path d="M228.500 290V335.500H582.500V290M405.500 270V286" />
    </g>
    <circle cx="405.500" cy="266.500" r="4" fill="#3367e8" />
    {[[228.500, 290.500], [405.500, 290.500], [582.500, 290.500], [228.500, 312.500], [582.500, 312.500], [228.500, 335.500], [405.500, 335.500], [582.500, 335.500]].map(([x, y], i) => (
      <rect key={i} x={x - 3.500} y={y - 3.500} width="7" height="7" fill="#3367e8" stroke="#fff" strokeWidth="2" paintOrder="stroke" />
    ))}
  </Art>
);

const G = () => <Favicon $bg="#fff" $r="50%"><FcGoogle size={13} /></Favicon>;
const tabs = [
  ["Danh sác", <BarsIcon />, -0.2], ["java cơ bả", <G />, -0.2], ["dịch - Tìm", <G />, -0.1], ["Việc Làm", <RunnerIcon />, 0], ["CỬu vạn", <G />, 0.2],
  ["Các kiểu v", <VIcon />, -0.2], ["logo com", <G />, -0.1], ["Slide ĐAT", <SlidesFav />, 0, true], ["Facebook", <FbIcon />, 0],
];
const bookmarks = [
  ["Apps", <AppsIcon />, 75, 1, 9], ["Gmail", <GmailIcon />, 79, 0.1], ["YouTube", <YtIcon />, 99, 0.25], ["Maps", <MapsIcon />, 77, 0], ["News", <NewsIcon />, 78, 0],
  ["Translate", <TranslateIcon />, 104, 0.25], ["Tóm tắt - OE2…", <ArcIcon />, 154, 0.35], ["Đăng xuất", <MdPublic size={17} />, 113, 0.35], ["Lab - Google D…", <DriveIcon />, 140, 0.12],
];
const menus = [["Tệp", 37], ["Chỉnh sửa", 79], ["Xem", 43], ["Chèn", 47], ["Định dạng", 78], ["Trang trình bày", 110], ["Sắp xếp", 65], ["Công cụ", 66], ["Tiện ích bổ sung", 120], ["Trợ giúp", 67]];

const NumberField = ({ label, value, unit, lw = 122 }) => (
  <Field>
    <FieldLabel $w={lw}>{label}</FieldLabel>
    <FieldRow><Input>{value}<Spin><i /><i /></Spin></Input><Unit $pct={unit === "%"}>{unit}</Unit></FieldRow>
  </Field>
);

export default function App() {
  return (
    <Screen>
      <Global />
      <TopBar>
        <TopGroup $w="677px">
          <Txt $w={88} $s={14} $b={600} $ls={0.4}>Activities</Txt>
          <ChromeLogo s={16} /><Gap $w={6} />
          <Txt $w={116} $s={14} $b={600}>Google Chrome</Txt>
          <Caret $s={5} $c="#dfdbd2" />
        </TopGroup>
        <Txt $w={509} $s={14} $b={600} $ls={-0.3} $up={1}>T6 21:00</Txt>
        <Txt $w={19} $s={14} $b={600}>vi</Txt>
        <Caret $s={5} $c="#dfdbd2" $m="0 33px 0 0" />
        <TopGroup $gap={12}><Wifi /><Sound /><Battery /><Caret $s={5} $c="#dfdbd2" /></TopGroup>
      </TopBar>
      <Body>
        <Dock>
          <DockItem><DockTile $active><ChromeLogo s={45} /></DockTile><DockDots><i /><i /></DockDots></DockItem>
          <DockItem><DockTile><FilesIcon /></DockTile><DockDots><i /></DockDots></DockItem>
          <DockItem><DockTile><WriterIcon /></DockTile><DockDots><i /></DockDots></DockItem>
          <DockItem><DockTile $pt={4}><TerminalIcon /></DockTile><DockDots><i /></DockDots></DockItem>
          <DockItem><DockTile><SublimeIcon /></DockTile><DockDots><i /><i /><i /></DockDots></DockItem>
          <DockItem><DockTile $pb={2}><FoxitIcon /></DockTile></DockItem>
          <DockApps><GridDots /></DockApps>
        </Dock>
        <Browser>
          <TabStrip>
            {tabs.map(([t, icon, ls, active], i) => (
              <React.Fragment key={t}>
                <Tab $active={active}><Favicon>{icon}</Favicon><TabText $ls={ls}>{t}</TabText><X /></Tab>
                {i !== 6 && i !== 7 && <TabSep />}
              </React.Fragment>
            ))}
            <TopGroup $w="45px" $j="center">
              <svg width="12" height="12" viewBox="0 0 12 12"><path d="M6 0v12M0 6h12" stroke="#e3e0d8" strokeWidth="2" /></svg>
            </TopGroup>
            <WinButtons>
              <WinButton><svg width="8" height="8"><path d="M0 4h8" stroke="#3a3834" strokeWidth="1.200" /></svg></WinButton>
              <WinButton><svg width="8" height="8"><path d="M.5 1.500h7v5h-7z" fill="none" stroke="#3a3834" /></svg></WinButton>
              <WinButton $red><X s={6} c="#3a1c12" w={1.600} /></WinButton>
            </WinButtons>
          </TabStrip>
          <AddressRow>
            <NavCell><MdArrowBack size={18} /></NavCell>
            <NavCell $c="#a9abad"><MdArrowForward size={18} /></NavCell>
            <NavCell><MdRefresh size={19} /></NavCell>
            <UrlPill>
              <MdLock size={13} color="#5f6368" />
              <Url><b>docs.google.com</b>/presentation/d/1UNlfaZytXila5KY4uxYQEPHZU9mRTMFRU9iHs3CrGNo/edit#slide=id.g8d5e6a6ff2_0_261</Url>
              <MdStarBorder size={17} color="#5f6368" />
            </UrlPill>
            <TopGroup>
              <svg width="30" height="16" viewBox="0 0 30 16"><path d="M14 8a8 8 0 1 1 8 8h-8z" fill="#b2b2b2" /><path d="M17.500 5.500h6v1.500l3-1.500v5l-3-1.500v1.500h-6z" fill="#e6e6e6" /></svg>
              <VRule $h={16} $c="#c6c6c6" $m="0 11px 0 14px" />
              <RoundT $d={22} $fs={12}>T</RoundT>
            </TopGroup>
            <TopGroup $w="42px" $j="center"><MdMoreVert size={18} /></TopGroup>
          </AddressRow>
          <Bookmarks>
            {bookmarks.map(([t, icon, w, ls]) => <Bookmark key={t} $w={w}>{icon}<Txt $s={14.500} $ls={ls > 0.9 ? 0.1 : ls}>{t}</Txt></Bookmark>)}
          </Bookmarks>

          <DocHeader>
            <TopGroup><SlidesDocIcon /></TopGroup>
            <TitleBlock>
              <TitleRow>
                <Txt $w={110} $s={18} $c="#000" $up={2}>Slide ĐATN</Txt>
                <Txt $w={29}><MdStarBorder size={17} /></Txt>
                <Txt $w={31}><MdOutlineDriveFileMove size={17} /></Txt>
                <Txt $w={23}><MdOutlineCloudDone size={17} /></Txt>
                <Txt $s={12} $b={500} $ls={-0.03}>Đã lưu vào Drive</Txt>
              </TitleRow>
              <MenuRow>
                {menus.map(([m, w]) => <Txt key={m} $w={w} $s={14} $ls={0.12}>{m}</Txt>)}
                <MenuLink>Chỉnh sửa lần cu…</MenuLink>
              </MenuRow>
            </TitleBlock>
            <HeaderActions>
              <MdComment size={23} color="#5f6368" />
              <SplitButton>
                <TopGroup $w="113px" $gap={11} $j="center"><PlayBox /><Txt $s={14} $b={500} $ls={0.4} $up={2}>Trình bày</Txt></TopGroup>
                <VRule $h={34} /><TopGroup $w="19px" $j="center"><Caret $c="#202124" /></TopGroup>
              </SplitButton>
              <ShareButton><TopGroup $gap={7}><ShareIcon /><Txt $s={14} $b={500} $ls={0.4} $up={2}>Chia Sẻ</Txt></TopGroup></ShareButton>
              <RoundT $d={32} $fs={18}>T</RoundT>
            </HeaderActions>
          </DocHeader>

          <Work>
            <Editor>
              <Tools>
                <Tool $w={44} $bg="#f1f3f4"><MdAdd size={18} /><Caret $m="0 0 0 9px" /></Tool>
                <Tool $ml={3}><MdUndo size={19} /></Tool>
                <Tool><MdRedo size={19} /></Tool>
                <Tool><MdPrint size={19} /></Tool>
                <Tool $c="#bdc1c6"><MdFormatPaint size={17} /></Tool>
                <VRule $h={20} $m="0 5px 0 4px" />
                <Tool><MdZoomIn size={19} /></Tool>
                <Tool $w={16}><Caret /></Tool>
                <VRule $h={20} $m="0 5px 0 5px" />
                <Tool $w={26} $bg="#feefc3"><ArrowCursor /></Tool>
                <Tool $ml={1}><TextBoxIcon /></Tool>
                <Tool $w={26}><MdImage size={20} /></Tool>
                <Tool $w={9}><Caret /></Tool>
                <Tool $ml={5}><ShapeIcon /></Tool>
                <Tool $ml={2}><LineIcon /></Tool>
                <Tool $w={16}><Caret /></Tool>
                <VRule $h={20} $m="0 5px 0 5px" />
                <Tool><MdFormatColorFill size={18} /></Tool>
                <Tool $ml={3}><MdEdit size={17} /></Tool>
                <Tool $ml={1}><WeightIcon /></Tool>
                <Tool $ml={2}><DashIcon /></Tool>
                <VRule $h={20} $m="0 16px 0 5px" />
                <Txt $w={80} $s={12} $b={500} $ls={0.100}>Arial</Txt>
                <Caret />
                <SizeBox><div><MdRemove size={15} /></div><div /><div><MdAdd size={15} /></div></SizeBox>
                <Tool $ml={5}><MdMoreHoriz size={18} /></Tool>
                <Tool $ml={124}><Chev dir="up" s={17} w={2.200} /></Tool>
              </Tools>
              <Stage>
                <Film>
                  <FilmScroll>
                    <FilmList>
                      {films.map(f => (
                        <FilmRow key={f.n} $active={f.active}>
                          <FilmMeta $active={f.active}>{f.n}<AnimIcon bg={f.active ? "#fdf0c2" : "#fff"} /></FilmMeta>
                          <Frame $active={f.active}>{f.el}</Frame>
                        </FilmRow>
                      ))}
                    </FilmList>
                    <FilmBar />
                  </FilmScroll>
                  <ViewSwitch>
                    <ViewTab $w={48} $on><svg width="14" height="10" viewBox="0 0 14 10" fill="#202124"><path d="M0 0h4v10H0zM5 0h9v6H5zM5 7h9v3H5z" /></svg></ViewTab>
                    <ViewTab $w={14} $ml={76}><svg width="14" height="11" viewBox="0 0 14 11" fill="#757575"><path d="M0 0h4v5H0zM5 0h4v5H5zM10 0h4v5h-4zM0 6h4v5H0zM5 6h4v5H5zM10 6h4v5h-4z" /></svg></ViewTab>
                  </ViewSwitch>
                </Film>
                <CanvasCol>
                  <Upper>
                    <RulerV><VTicks /></RulerV>
                    <UpperMain>
                      <RulerH><HTicks /></RulerH>
                      <CanvasArea>
                        <SlidePage>
                          <Art width="675" height="380" viewBox="0 0 675 380"><path d={CURVE} fill="#262626" /><Badge x={618.5} y={34} /></Art>
                          <SlideText $x={463} $y={31.500} $s={22} $b={700} $ls={0.3} $c="#ff930f">Chức năng</SlideText>
                          <SlideText $x={111} $y={75} $s={14} $c="#000">Quản trị viên</SlideText>
                          <Box $x={141} $y={113} /><Box $x={167} $y={172} /><Box $x={207} $y={231} />
                          <SlideText $x={160} $y={133} $s={11} $ls={0.130} $c="#636363">Quản lý tài khoản</SlideText>
                          <SlideText $x={188.500} $y={192} $s={11} $ls={0.130} $c="#636363">Quản lý công việc</SlideText>
                          <SlideText $x={228.500} $y={251} $s={11} $ls={0.130} $c="#636363">Tham gia <u>khoá</u> học</SlideText>
                          <SlideText $x={304} $y={310} $s={11} $ls={0.130} $c="#636363">Làm bài kiểm tra</SlideText>
                          <Bullet $x={99.500} $y={135.500} $c="#ff930f">1</Bullet>
                          <Bullet $x={125.500} $y={196} $c="#404040">2</Bullet>
                          <Bullet $x={166} $y={256.500} $c="#ff930f">3</Bullet>
                          <Bullet $x={246} $y={317} $c="#404040">4</Bullet>
                          <Selection />
                        </SlidePage>
                      </CanvasArea>
                    </UpperMain>
                  </Upper>
                  <Grip><i /><i /><i /></Grip>
                  <Notes>
                    <Txt $s={14.500} $ls={0.075}>Nhấp để thêm ghi chú của người thuyết trình</Txt>
                    <ExploreButton><MdAssistant size={22} /></ExploreButton>
                  </Notes>
                </CanvasCol>
              </Stage>
            </Editor>

            <Panel>
              <PanelHead>
                <FormatIcon /><Gap $w={15} /><Txt $s={16} $w={215} $ls={0.330} $up={1}>Tùy chọn định dạng</Txt>
                <X s={12} c="#5f6368" w={1.200} />
              </PanelHead>
              <PanelBody>
                <PanelCol>
                  <Card>
                    <SectionHead $pl={4} $gap={17}><Chev dir="down" />Kích thước và xoay</SectionHead>
                    <SubHead $h={38}>Kích thước</SubHead>
                    <Fields $mt={1}>
                      <NumberField label="Chiều rộng" value="13.33" unit="cm" />
                      <NumberField label="Chiều cao" value="1.69" unit="cm" />
                    </Fields>
                    <Fields $mt={28}>
                      <NumberField label="Phạm vi theo chiều rộng" lw={105} value="100" unit="%" />
                      <NumberField label="Phạm vi theo chiều cao" value="100" unit="%" />
                    </Fields>
                    <CheckRow><Check><MdCheck size={16} /></Check><Txt $s={14}>Khóa tỷ lệ khung hình</Txt></CheckRow>
                    <SubHead $h={36} $mt={20}>Xoay</SubHead>
                    <RotateRow>
                      <RotateCol $w={91} $gap={7}>
                        <FieldLabel>Góc</FieldLabel>
                        <TopGroup $gap={8}><Input $w={48}>0<Spin><i /><i /></Spin></Input><Degree>°</Degree></TopGroup>
                      </RotateCol>
                      <RotateCol $w={51}><FieldLabel>90°</FieldLabel><Indent><RotateIcon /></Indent></RotateCol>
                      <RotateCol $w={57}><FieldLabel>Lật</FieldLabel><Indent><FlipH /></Indent></RotateCol>
                      <RotateCol $w={22}><FieldLabel>&nbsp;</FieldLabel><FlipV /></RotateCol>
                    </RotateRow>
                  </Card>
                  <SectionHead $pl={20} $gap={17}><Chev dir="right" />Vị trí</SectionHead>
                  <SectionHead $h={58} $pl={20} $gap={17}><Chev dir="right" />Điều chỉnh văn bản</SectionHead>
                </PanelCol>
                <PanelBar />
              </PanelBody>
            </Panel>
            <SideRail>
              <CalendarIcon /><KeepIcon /><TasksIcon /><Chev dir="right" s={11} w={3} />
            </SideRail>
          </Work>
        </Browser>
      </Body>
    </Screen>
  );
}
